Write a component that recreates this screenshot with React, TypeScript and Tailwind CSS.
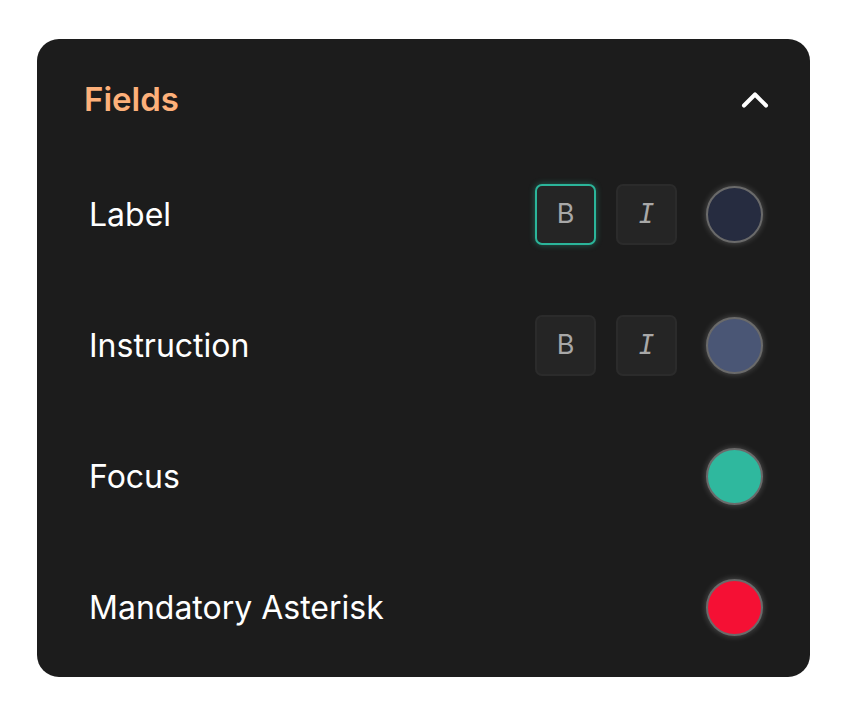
import { ChevronUp } from 'lucide-react'

type Row = {
    label: string
    color: string
    styles?: boolean
    boldActive?: boolean
}

const rows: Row[] = [
    { label: 'Label', color: '#262c40', styles: true, boldActive: true },
    { label: 'Instruction', color: '#4a5675', styles: true },
    { label: 'Focus', color: '#2fb89e' },
    { label: 'Mandatory Asterisk', color: '#f51034' },
]

function StyleButton({ children, active }: { children: React.ReactNode; active?: boolean }) {
    return (
        <button
            className={`w-[61px] h-[61px] rounded-[7px] flex items-center justify-center bg-[#252525] text-[#a8a8a8] text-[27px] ${
                active
                    ? 'border-2 border-[#2bb59a] shadow-[0_0_6px_rgba(43,181,154,0.45)]'
                    : 'border-2 border-[#2b2b2b]'
            }`}
        >
            {children}
        </button>
    )
}

export default function App() {
    return (
        <div className="w-[848px] h-[713px] bg-white pt-[39px] pl-[37px] font-['Inter',sans-serif]">
            <div className="w-[773px] h-[638px] bg-[#1c1c1c] rounded-[22px] pt-[41px]">
                {/* header */}
                <div className="flex items-center justify-between h-[40px] pl-[47px] pr-[33px]">
                    <span className="text-[33px] font-semibold text-[#fdb07a]">Fields</span>
                    <ChevronUp className="w-[44px] h-[44px] text-white" strokeWidth={2.2} />
                </div>

                <div className="flex flex-col gap-[70px] mt-[64px] pl-[52px] pr-[47px]">
                    {rows.map((r) => (
                        <div key={r.label} className="flex items-center justify-between h-[61px]">
                            <span className="text-[32px] text-white font-normal">{r.label}</span>
                            <div className="flex items-center gap-[20px]">
                                {r.styles && (
                                    <>
                                        <StyleButton active={r.boldActive}>B</StyleButton>
                                        <StyleButton>
                                            <span className="italic font-['DejaVu_Sans_Mono',monospace] text-[26px]">I</span>
                                        </StyleButton>
                                    </>
                                )}
                                <div
                                    className="w-[57px] h-[57px] rounded-full border-2 border-[#6a6a6a] shadow-[0_0_6px_rgba(255,255,255,0.25)] ml-[9px]"
                                    style={{ background: r.color }}
                                />
                            </div>
                        </div>
                    ))}
                </div>
            </div>
        </div>
    )
}
